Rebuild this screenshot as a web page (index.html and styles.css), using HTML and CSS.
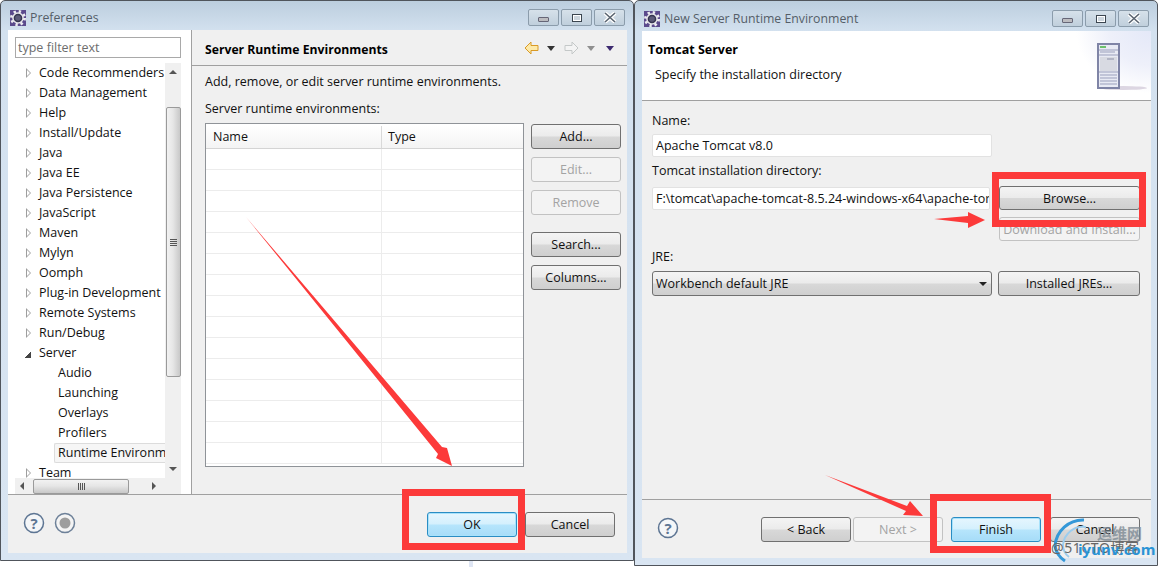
FILE: index.html
```html
<!DOCTYPE html>
<html lang="en">
<head>
<meta charset="utf-8">
<title>Preferences</title>
<link rel="stylesheet" href="styles.css">
</head>
<body>
<div class="desktop">
  <section class="win win-left">
    <header class="titlebar">
      <svg class="app-icon" viewBox="0 0 16 16"><rect width="16" height="16" fill="#5b4a8c"/><circle cx="8" cy="8" r="6.500" fill="none" stroke="#ecebf0" stroke-width="3" stroke-dasharray="2.300 2.800"/><circle cx="8" cy="8" r="5.800" fill="#e6e5ea"/><circle cx="8" cy="8" r="4.300" fill="#35344f"/><circle cx="8" cy="8" r="2.800" fill="#5c5a78"/></svg>
      <span class="title">Preferences</span>
      <div class="controls">
        <span class="ctl"><i class="ctl-min"></i></span>
        <span class="ctl"><i class="ctl-max"></i></span>
        <span class="ctl ctl-x"><svg viewBox="0 0 14 11"><path d="M2 1l10 9M12 1L2 10" stroke="#fff" stroke-width="4"/><path d="M2 1l10 9M12 1L2 10" stroke="#5a6470" stroke-width="1.600"/></svg></span>
      </div>
    </header>
    <div class="client">
      <div class="split">
        <aside class="nav">
          <div class="filter">type filter text</div>
          <div class="tree-wrap">
            <div class="tree-body">
              <ul class="tree">
                <li class="node">Code Recommenders</li>
                <li class="node">Data Management</li>
                <li class="node">Help</li>
                <li class="node">Install/Update</li>
                <li class="node">Java</li>
                <li class="node">Java EE</li>
                <li class="node">Java Persistence</li>
                <li class="node">JavaScript</li>
                <li class="node">Maven</li>
                <li class="node">Mylyn</li>
                <li class="node">Oomph</li>
                <li class="node">Plug-in Development</li>
                <li class="node">Remote Systems</li>
                <li class="node">Run/Debug</li>
                <li class="node open">Server</li>
                <li class="leaf">Audio</li>
                <li class="leaf">Launching</li>
                <li class="leaf">Overlays</li>
                <li class="leaf">Profilers</li>
                <li class="leaf selected">Runtime Environm</li>
                <li class="node">Team</li>
              </ul>
              <div class="vscroll">
                <span class="tri-up"></span>
                <span class="vthumb"><i></i></span>
                <span class="tri-down"></span>
              </div>
            </div>
            <div class="hscroll">
              <span class="tri-left"></span>
              <span class="hthumb"><i></i></span>
              <span class="tri-right"></span>
            </div>
          </div>
        </aside>
        <main class="page">
          <div class="page-head">
            <h1 class="page-title pref-title">Server Runtime Environments</h1>
            <div class="history">
              <svg class="hist-arrow" viewBox="0 0 15 14"><path d="M7 1L1 7l6 6V9.500h7v-5H7z" fill="#fde9a8" stroke="#d99a26"/></svg>
              <span class="drop"></span>
              <svg class="hist-arrow gap-arrow" viewBox="0 0 15 14"><path d="M8 1l6 6-6 6V9.500H1v-5h7z" fill="#f4f4f4" stroke="#c4c8c8"/></svg>
              <span class="drop drop-off"></span>
              <span class="drop drop-menu"></span>
            </div>
          </div>
          <div class="page-body">
            <p class="desc">Add, remove, or edit server runtime environments.</p>
            <p class="list-label">Server runtime environments:</p>
            <div class="table-row">
              <div class="table">
                <div class="thead"><span class="th-name">Name</span><span class="th-type">Type</span></div>
                <div class="tbody"></div>
              </div>
              <div class="side">
                <button class="btn">Add...</button>
                <button class="btn off">Edit...</button>
                <button class="btn off">Remove</button>
                <button class="btn mt-spaced">Search...</button>
                <button class="btn">Columns...</button>
              </div>
            </div>
          </div>
        </main>
      </div>
      <footer class="foot">
        <svg class="round" viewBox="0 0 22 22"><circle cx="11" cy="11" r="9.500" fill="#f4f6f8" stroke="#5d7593" stroke-width="1.500"/><text x="11" y="16.500" class="q">?</text></svg>
        <svg class="round" viewBox="0 0 22 22"><circle cx="11" cy="11" r="9.500" fill="#f4f4f4" stroke="#6d8098" stroke-width="1.500"/><circle cx="11" cy="11" r="5.500" fill="#9d9d9d"/></svg>
        <div class="foot-btns">
          <button class="btn primary">OK</button>
          <button class="btn">Cancel</button>
        </div>
      </footer>
    </div>
  </section>

  <section class="win win-right">
    <header class="titlebar">
      <svg class="app-icon" viewBox="0 0 16 16"><rect width="16" height="16" fill="#5b4a8c"/><circle cx="8" cy="8" r="6.500" fill="none" stroke="#ecebf0" stroke-width="3" stroke-dasharray="2.300 2.800"/><circle cx="8" cy="8" r="5.800" fill="#e6e5ea"/><circle cx="8" cy="8" r="4.300" fill="#35344f"/><circle cx="8" cy="8" r="2.800" fill="#5c5a78"/></svg>
      <span class="title">New Server Runtime Environment</span>
      <div class="controls">
        <span class="ctl"><i class="ctl-min"></i></span>
        <span class="ctl"><i class="ctl-max"></i></span>
        <span class="ctl ctl-x"><svg viewBox="0 0 14 11"><path d="M2 1l10 9M12 1L2 10" stroke="#fff" stroke-width="4"/><path d="M2 1l10 9M12 1L2 10" stroke="#5a6470" stroke-width="1.600"/></svg></span>
      </div>
    </header>
    <div class="client client-r">
      <div class="wiz-head">
        <div class="wiz-text">
          <h2 class="page-title">Tomcat Server</h2>
          <p class="wiz-sub">Specify the installation directory</p>
        </div>
        <div class="wiz-art">
          <svg class="server" viewBox="0 0 50 50">
            <ellipse cx="26" cy="45" rx="24" ry="2" fill="#dcd6e2"/>
            <rect x="1" y="1" width="21" height="44" fill="#e8eaf4" stroke="#7f84a6" stroke-width="2"/>
            <rect x="3" y="3" width="6" height="2" fill="#6cc06c"/>
            <path d="M2 7h19M3 9h15M2 12h19M2 29h19M3 32h17M3 35h17M3 38h17M3 41h17" stroke="#9a9fbb"/>
            <rect x="3" y="14" width="17" height="14" fill="#d8dae2"/>
            <path d="M10 16h7" stroke="#8c90a8"/>
          </svg>
        </div>
      </div>
      <div class="wiz-body">
        <label class="lbl">Name:</label>
        <div class="field name-field">Apache Tomcat v8.0</div>
        <label class="lbl">Tomcat installation directory:</label>
        <div class="row-dir">
          <div class="field dir-field">F:\tomcat\apache-tomcat-8.5.24-windows-x64\apache-tor</div>
          <div class="dir-btns">
            <button class="btn wide">Browse...</button>
            <button class="btn wide off">Download and Install...</button>
          </div>
        </div>
        <label class="lbl lbl-jre">JRE:</label>
        <div class="row-jre">
          <div class="combo"><span>Workbench default JRE</span><i class="combo-arrow"></i></div>
          <button class="btn jre-btn">Installed JREs...</button>
        </div>
      </div>
      <footer class="foot foot-r">
        <svg class="round" viewBox="0 0 22 22"><circle cx="11" cy="11" r="9.500" fill="#f4f6f8" stroke="#5d7593" stroke-width="1.500"/><text x="11" y="16.500" class="q">?</text></svg>
        <div class="foot-btns wiz-btns">
          <button class="btn">&lt; Back</button>
          <button class="btn off">Next &gt;</button>
          <button class="btn primary">Finish</button>
          <button class="btn">Cancel</button>
        </div>
      </footer>
    </div>
  </section>

  <i class="sliver"></i>

  <svg class="marks" viewBox="0 0 1158 567">
    <g fill="none" stroke="#fc3a3a" stroke-width="7">
      <rect x="405.500" y="492.500" width="116" height="54"/>
      <rect x="933.500" y="497.500" width="114" height="52"/>
      <rect x="995.500" y="175.500" width="147" height="48"/>
    </g>
    <g fill="#fc3a3a">
      <path d="M246 217L442 447 447 448 452 466 436 458 438 454z"/>
      <path d="M934 219L968 216 968 212 985 220 968 228 968 223z"/>
      <path d="M825 475L907 506 910 501 923 516 903 515 906 511z"/>
    </g>
    <g class="wm">
      <path d="M1084 520a28 28 0 0 0-29 26 22 22 0 0 0 10 15" fill="none" stroke="#3498d8" stroke-width="3"/>
      <path d="M1086 527a20 20 0 0 0-23 18 15 15 0 0 0 6 12" fill="none" stroke="#9ccdee" stroke-width="2"/>
      <text x="1097" y="539" class="wm-cn">运维网</text>
      <text x="1051" y="553" class="wm-gray">@51CTO博客</text>
      <text x="1078" y="555" class="wm-blue">iyunv.com</text>
    </g>
  </svg>
</div>
</body>
</html>
```
FILE: styles.css
```css
* { box-sizing: border-box; }
html, body { margin: 0; padding: 0; background: #fff; }
body { font: 12.5px/17px "Open Sans", "Noto Sans", sans-serif; color: #111; overflow: hidden; }
p, h1, h2, ul { margin: 0; padding: 0; }

.desktop { position: relative; width: 1158px; height: 567px; overflow: hidden; }
.win {
  position: absolute; top: 0; display: flex; flex-direction: column;
  border: 1px solid #50555c; border-radius: 5px 5px 0 0;
  background: linear-gradient(#bccede 0, #d3e1ef 30px, #d9e5f2 100%);
  padding: 0 6px 7px 7px;
}
.win-left { left: 0; width: 634px; height: 561px; }
.win-right { left: 634px; width: 524px; height: 566px; }
.sliver { position: absolute; left: 469px; top: 561px; width: 4px; height: 6px; background: #dfe6f4; }

.titlebar { height: 29px; display: flex; align-items: center; flex: none; padding-top: 4px; }
.win-right .titlebar { height: 30px; padding-top: 5px; }
.app-icon { width: 16px; height: 16px; margin: 0 4px 0 2px; flex: none; }
.title { color: #555e68; font-size: 12.3px; }
.controls { margin-left: auto; display: flex; gap: 2px; margin-right: 2px; padding-top: 0; }
.ctl {
  width: 31px; height: 17px; border: 1px solid #8b9cab; border-radius: 2px;
  background: linear-gradient(#d6e1ea, #c0cfdc);
  display: flex; align-items: center; justify-content: center;
}
.ctl-min { width: 11px; height: 5px; margin-top: 3px; background: #bcbcc0; border: 1px solid #667; border-radius: 1px; }
.ctl-max { width: 10px; height: 8px; border: 1px solid #3c4650; box-shadow: inset 0 0 0 1px #fff; background: #cdd6de; }
.ctl-x svg { width: 14px; height: 11px; display: block; }

.client { flex: 1; background: #f0f0f0; display: flex; flex-direction: column; min-height: 0; }
.split { flex: 1; display: flex; min-height: 0; border-bottom: 1px solid #a0a0a0; }

.nav { width: 184px; flex: none; background: #fff; border-right: 1px solid #a0a0a0; padding: 7px 10px 0 7px; display: flex; flex-direction: column; position: relative; }
.filter { height: 21px; border: 1px solid #a9a9a9; color: #6d6d6d; padding: 0 2px; line-height: 20px; flex: none; }
.tree-wrap { flex: 1; margin-top: 5px; display: flex; flex-direction: column; min-height: 0; }
.tree-body { flex: 1; display: flex; min-height: 0; overflow: hidden; }
.tree { list-style: none; flex: 1; width: 150px; min-width: 0; overflow: hidden; }
.node, .leaf { height: 20px; line-height: 20px; white-space: nowrap; overflow: visible; }
.node { padding-left: 24px; position: relative; }
.node::before {
  content: ""; position: absolute; left: 11px; top: 5px;
  border-left: 5px solid #9e9e9e; border-top: 5px solid transparent; border-bottom: 5px solid transparent;
}
.node::after {
  content: ""; position: absolute; left: 12px; top: 7px;
  border-left: 3px solid #fff; border-top: 3px solid transparent; border-bottom: 3px solid transparent;
}
.node.open::before { left: 10px; top: 9px; border-left: 0; border-top: 0; border-right: 0; border-bottom: 0; width: 6px; height: 6px; background: linear-gradient(135deg, transparent 50%, #444 50%); }
.node.open::after { display: none; }
.leaf { padding-left: 43px; }
.leaf.selected { margin-left: 39px; padding-left: 3px; border: 1px solid #dcdcdc; border-right: 0; border-radius: 2px 0 0 2px; background: #f6f6f6; line-height: 18px; overflow: hidden; }

.vscroll { width: 16px; flex: none; background: #f0f0f0; position: relative; display: flex; flex-direction: column; align-items: center; }
.tri-up, .tri-down { width: 0; height: 0; border-left: 4px solid transparent; border-right: 4px solid transparent; flex: none; }
.tri-up { border-bottom: 4px solid #555; margin: 7px 0 0; }
.tri-down { border-top: 4px solid #555; margin: auto 0 7px; }
.vthumb { width: 15px; height: 270px; margin-top: 33px; flex: none; border: 1px solid #9a9a9a; border-radius: 2px; background: linear-gradient(90deg, #f2f2f2, #e6e6e6 45%, #c8c8c8); display: flex; align-items: center; justify-content: center; }
.vthumb i { width: 7px; height: 7px; background: repeating-linear-gradient(#555 0 1px, transparent 1px 2px); }

.hscroll { height: 16px; flex: none; background: #f0f0f0; display: flex; align-items: center; margin-bottom: 0; }
.tri-left, .tri-right { width: 0; height: 0; border-top: 4px solid transparent; border-bottom: 4px solid transparent; flex: none; }
.tri-left { border-right: 4px solid #555; margin-left: 5px; }
.tri-right { border-left: 4px solid #555; margin-left: 23px; }
.hthumb { width: 96px; height: 15px; margin-left: 9px; flex: none; border: 1px solid #9a9a9a; border-radius: 2px; background: linear-gradient(#f2f2f2, #e6e6e6 45%, #c8c8c8); display: flex; align-items: center; justify-content: center; }
.hthumb i { width: 7px; height: 7px; background: repeating-linear-gradient(90deg, #555 0 1px, transparent 1px 2px); }

.page { flex: 1; min-width: 0; display: flex; flex-direction: column; }
.page-head { height: 36px; border-bottom: 1px solid #a0a0a0; flex: none; padding: 4px 13px 0 13px; display: flex; align-items: center; justify-content: space-between; }
.page-title { font-size: 12.5px; font-weight: 700; color: #000; }
.pref-title { font-size: 12.2px; }
.history { display: flex; align-items: center; margin-top: -3px; }
.hist-arrow { width: 15px; height: 14px; flex: none; }
.gap-arrow { margin-left: 9px; }
.drop { width: 0; height: 0; margin-left: 8px; border-left: 4px solid transparent; border-right: 4px solid transparent; border-top: 5px solid #333; }
.drop-off { border-top-color: #8f8f8f; }
.drop-menu { margin-left: 11px; border-top-color: #3d2a70; }

.page-body { padding: 6px 13px 0; flex: 1; display: flex; flex-direction: column; }
.desc { height: 20px; line-height: 20px; }
.list-label { height: 20px; line-height: 20px; margin-top: 7px; }
.table-row { display: flex; gap: 7px; margin-top: 4px; }
.table { width: 319px; height: 344px; border: 1px solid #8f9398; background: #fff; padding: 2px 0 0; flex: none; }
.thead { height: 23px; display: flex; background: linear-gradient(#fff, #f4f4f4); border-bottom: 1px solid #d4d4d4; line-height: 21px; }
.th-name { width: 176px; padding-left: 7px; border-right: 1px solid #d9d9d9; }
.th-type { padding-left: 6px; }
.tbody { height: 315px; background: linear-gradient(90deg, transparent 175px, #ececec 175px, #ececec 176px, transparent 176px), repeating-linear-gradient(#fff 0 20px, #ececec 20px 21px); }
.side { display: flex; flex-direction: column; gap: 8px; padding-top: 1px; }
.mt-spaced { margin-top: 9px; }

.btn {
  width: 90px; height: 25px; padding: 0; font: inherit; color: #111; flex: none;
  border: 1px solid #707070; border-radius: 3px;
  background: linear-gradient(#f4f4f4 0, #ebebeb 48%, #d8d8d8 52%, #cfcfcf 100%);
}
.btn.off { color: #a3a3a3; border-color: #c2c2c2; background: #f3f3f3; }
.btn.primary { border-color: #2a8dc4; background: linear-gradient(#e6f6fe 0, #d4f0fd 48%, #b6e5fc 52%, #a6dcf8 100%); box-shadow: inset 0 0 0 1px #a8e2fb; }

.foot { height: 58px; flex: none; display: flex; align-items: flex-start; padding: 17px 12px 0 15px; gap: 9px; }
.foot-r { padding-right: 11px; }
.round { width: 22px; height: 22px; flex: none; margin-top: 0; }
.q { font: 700 15px "Open Sans", sans-serif; fill: #5d7593; text-anchor: middle; }
.foot-btns { margin-left: auto; display: flex; gap: 8px; }

.client-r { background: #f0f0f0; }
.wiz-head { height: 70px; flex: none; background: #fff; border-bottom: 1px solid #a0a0a0; display: flex; justify-content: space-between; }
.wiz-text { padding: 10px 6px 0; }
.wiz-sub { margin: 8px 0 0 7px; }
.wiz-art { width: 75px; height: 66px; flex: none; padding: 12px 0 0 21px; background: radial-gradient(75px 62px at 100% 0, #e4e8f8 0, #eef0fa 55%, #fff 100%); }
.server { width: 50px; height: 50px; display: block; }

.wiz-body { flex: 1; padding: 11px 10px 0; display: flex; flex-direction: column; border-bottom: 1px solid #a0a0a0; }
.lbl { height: 17px; line-height: 17px; display: block; }
.field { background: #fff; border: 1px solid #e2e2e2; border-radius: 2px; height: 23px; line-height: 21px; padding: 0 3px; white-space: nowrap; overflow: hidden; }
.name-field { width: 340px; margin: 5px 0 5px; }
.row-dir { display: flex; margin-top: 7px; gap: 9px; align-items: flex-start; }
.dir-field { width: 338px; margin-top: 1px; flex: none; }
.dir-btns { display: flex; flex-direction: column; gap: 7px; }
.btn.wide { width: 141px; height: 24px; }
.lbl-jre { margin-top: 7px; }
.row-jre { display: flex; gap: 6px; margin-top: 6px; }
.combo { width: 340px; height: 25px; border: 1px solid #707070; border-radius: 3px; background: linear-gradient(#f4f4f4 0, #ebebeb 48%, #d8d8d8 52%, #cfcfcf 100%); display: flex; align-items: center; justify-content: space-between; padding: 0 4px 0 3px; }
.combo-arrow { width: 0; height: 0; border-left: 4px solid transparent; border-right: 4px solid transparent; border-top: 4px solid #222; }
.btn.jre-btn { width: 142px; }

.wiz-btns { gap: 2px; }
.wiz-btns .primary { margin-left: 6px; margin-right: 7px; }

.marks { position: absolute; left: 0; top: 0; width: 1158px; height: 567px; pointer-events: none; }
.wm-cn { font: 700 15px "Noto Sans CJK SC", sans-serif; fill: #7d8a94; fill-opacity: .8; }
.wm-gray { font: 14px "Noto Sans", "Noto Sans CJK SC", sans-serif; fill: #666; letter-spacing: .6px; }
.wm-blue { font: 700 15px "Open Sans", sans-serif; fill: #2a93d5; }
```
